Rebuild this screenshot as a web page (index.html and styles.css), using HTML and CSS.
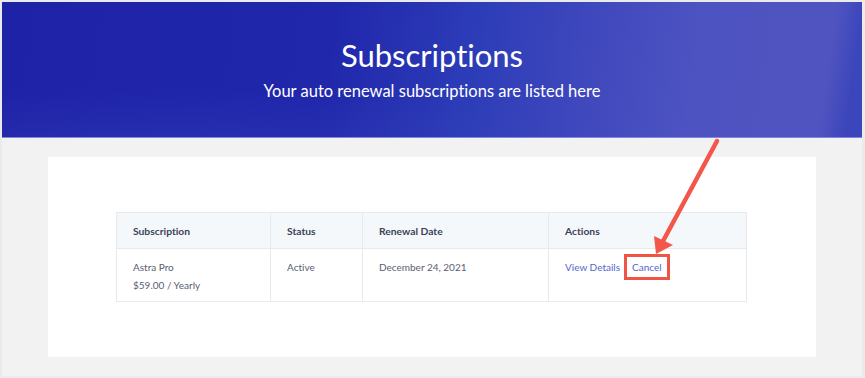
FILE: index.html
```html
<!doctype html>
<html lang="en">
	<head>
		<meta charset="UTF-8" />
		<meta name="viewport" content="width=device-width, initial-scale=1.0" />
		<title>Subscriptions</title>
		<link rel="stylesheet" href="styles.css">
	</head>

	<body>
		<div class="frame">
			<header class="hero">
				<h1>Subscriptions</h1>
				<p>Your auto renewal subscriptions are listed here</p>
			</header>

			<main class="content">
				<div class="card">
					<table class="subs-table">
						<colgroup>
							<col class="col-sub">
							<col class="col-status">
							<col class="col-date">
							<col class="col-actions">
						</colgroup>
						<thead>
							<tr>
								<th>Subscription</th>
								<th>Status</th>
								<th>Renewal Date</th>
								<th>Actions</th>
							</tr>
						</thead>
						<tbody>
							<tr>
								<td>Astra Pro<br>$59.00 / Yearly</td>
								<td>Active</td>
								<td>December 24, 2021</td>
								<td>
									<a href="#" class="action">View Details</a><a href="#" class="action highlight">Cancel</a>
								</td>
							</tr>
						</tbody>
					</table>
				</div>
			</main>

			<!-- annotation arrow -->
			<svg class="annotation" width="865" height="378" viewBox="0 0 865 378">
				<line x1="717" y1="141" x2="662" y2="243" stroke="#f2574a" stroke-width="4.5" stroke-linecap="round" />
				<polygon points="656,254 654,236 673,245" fill="#f2574a" />
			</svg>
		</div>
	</body>
</html>
```

FILE: styles.css
```css
body {
	margin: 0;
	font-family: Lato, "Open Sans", sans-serif;
	font-variant-ligatures: none;
	background: #ffffff;
}

.frame {
	position: relative;
	width: 865px;
	height: 378px;
	box-sizing: border-box;
	border: 2px solid #ebebeb;
	border-right-width: 3px;
	background: #f2f2f2;
	overflow: hidden;
}

.hero {
	height: 135px;
	border-bottom: 1px solid #7f88dc;
	box-sizing: content-box;
	color: #ffffff;
	text-align: center;
	background:
		radial-gradient(ellipse 700px 90px at 150px 150px, rgba(60, 70, 190, 0.35), rgba(60, 70, 190, 0) 70%),
		linear-gradient(98deg, #1e22a7 0%, #2027ab 38%, #2d3db8 55%, #4048bd 68%, #4d53c1 80%, #5054c0 95%, #3c46bb 98%);
	overflow: hidden;
}

.hero h1 {
	margin: 0;
	padding-top: 33px;
	font-size: 31px;
	font-weight: 400;
	line-height: 40px;
}

.hero p {
	margin: 0;
	padding-top: 4px;
	font-size: 16.5px;
	line-height: 24px;
}

.content {
	padding: 19px 46px 0 46px;
}

.card {
	background: #ffffff;
	height: 200px;
	box-sizing: border-box;
	padding: 55px 69px 0 68px;
}

.subs-table {
	width: 631px;
	table-layout: fixed;
	border-collapse: collapse;
	font-size: 10px;
	color: #5a6071;
}

.col-sub { width: 154px; }
.col-status { width: 92px; }
.col-date { width: 186px; }

.subs-table th,
.subs-table td {
	border: 1px solid #e6e9ee;
	text-align: left;
	vertical-align: top;
	padding: 0 16px;
}

.subs-table th {
	background: #f5f8fb;
	color: #3b4257;
	font-size: 10.3px;
	font-weight: 700;
	height: 35px;
	vertical-align: middle;
}

.subs-table td {
	height: 53px;
	padding-top: 9px;
	padding-bottom: 0;
	line-height: 18px;
	box-sizing: border-box;
}

.action {
	color: #5566cc;
	text-decoration: none;
}

.highlight {
	margin-left: 4px;
	padding: 4px 5px;
	border: 3px solid #ef5545;
}

.annotation {
	position: absolute;
	left: -2px;
	top: -2px;
	pointer-events: none;
}
```
